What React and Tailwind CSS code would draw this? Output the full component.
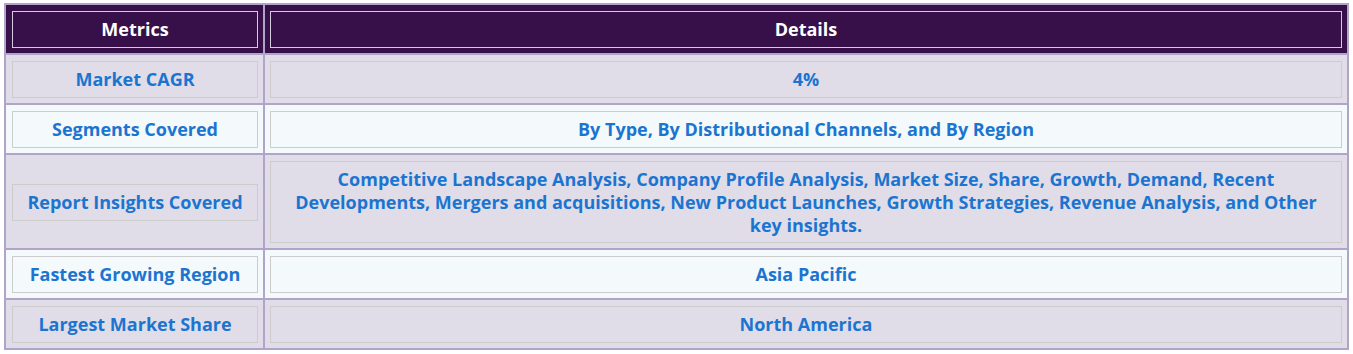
import React from "react";

const rows = [
  { metric: "Market CAGR", detail: "4%" },
  { metric: "Segments Covered", detail: "By Type, By Distributional Channels, and By Region" },
  {
    metric: "Report Insights Covered",
    detail:
      "Competitive Landscape Analysis, Company Profile Analysis, Market Size, Share, Growth, Demand, Recent Developments, Mergers and acquisitions, New Product Launches, Growth Strategies, Revenue Analysis, and Other key insights.",
    tight: true,
  },
  { metric: "Fastest Growing Region", detail: "Asia Pacific" },
  { metric: "Largest Market Share", detail: "North America" },
];

function Row({ left, right, bg, head, last, tight }) {
  const text = head ? "text-white" : "text-[#1b75d0]";
  const box = head ? "border-[#d4cbe0]" : "border-[#cccccc]";
  return (
    <div className={`grid grid-cols-[259px_1fr] ${bg} ${last ? "" : "border-b-2 border-[#b0a5c9]"}`}>
      <div className="border-r-2 border-[#b0a5c9] pl-[6px] pr-[5px] pt-[6px] pb-[5px] flex items-center">
        <div className={`w-full border ${box} ${text} font-bold text-[18px] leading-[23px] py-[6px] text-center`}>
          {left}
        </div>
      </div>
      <div className="pl-[5px] pr-[5px] pt-[6px] pb-[5px] flex items-center">
        <div
          className={`w-full border ${box} ${text} font-bold text-[18px] leading-[23px] ${
            tight ? "py-[5.5px]" : "py-[6px]"
          } px-[10px] text-center`}
        >
          {right}
        </div>
      </div>
    </div>
  );
}

export default function App() {
  return (
    <div className="bg-white min-h-screen pt-[3px] pl-[4px] font-['Open_Sans','Lato',sans-serif]">
      <div className="w-[1345px] border-2 border-[#b0a5c9]">
        <Row head left="Metrics" right="Details" bg="bg-[#37104a]" />
        {rows.map((r, i) => (
          <Row
            key={r.metric}
            left={r.metric}
            right={r.detail}
            tight={r.tight}
            bg={i % 2 === 0 ? "bg-[#e0dde9]" : "bg-[#f4f9fc]"}
            last={i === rows.length - 1}
          />
        ))}
      </div>
    </div>
  );
}
